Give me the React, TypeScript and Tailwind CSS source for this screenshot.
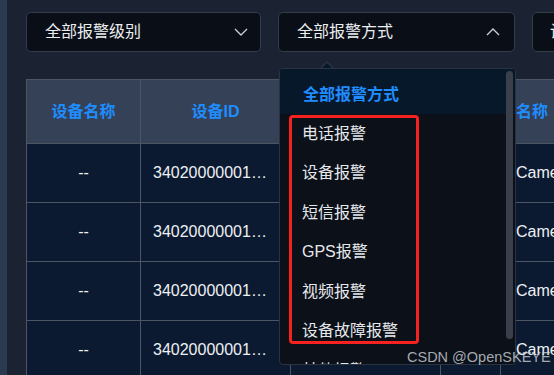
import React from 'react'

const FONT = { fontFamily: '"Liberation Sans", "Noto Sans CJK SC", sans-serif' }

const ALARM_TYPES = ['电话报警', '设备报警', '短信报警', 'GPS报警', '视频报警', '设备故障报警', '其他报警']

const ROWS = [0, 1, 2, 3]

function Chevron({ up }: { up?: boolean }) {
  return (
    <svg width="14" height="8" viewBox="0 0 14 8" className="shrink-0">
      <polyline
        points={up ? '1,7 7,1 13,7' : '1,1 7,7 13,1'}
        fill="none"
        stroke="#c9ccd2"
        strokeWidth="1.4"
      />
    </svg>
  )
}

function SelectBox({ label, up, className }: { label: string; up?: boolean; className: string }) {
  return (
    <div
      className={`h-[40px] shrink-0 rounded-[5px] border border-[#323c4b] bg-[#0a0e16] flex items-center justify-between text-[16px] text-[#eceef2] ${className}`}
    >
      <span>{label}</span>
      <Chevron up={up} />
    </div>
  )
}

export default function App() {
  return (
    <div className="relative w-[554px] h-[375px] overflow-hidden bg-[#1b2333] flex" style={FONT}>
      {/* side strip */}
      <div className="w-[7px] shrink-0 bg-[#2c3a4f]" />

      <div className="flex-1 pl-[19px] pt-[12px] min-w-0">
        {/* filter row */}
        <div className="flex gap-[17px]">
          <SelectBox label="全部报警级别" className="w-[235px] pl-[18px] pr-[12px]" />
          <SelectBox label="全部报警方式" up className="w-[237px] pl-[18px] pr-[14px]" />
          <SelectBox label="设备类型" className="w-[200px] pl-[17px] pr-[14px]" />
        </div>

        {/* table */}
        <div className="mt-[27px] w-[700px] border-l border-t border-[#4d5563]">
          <div className="grid grid-cols-[114px_150px_150px_60px_1fr] h-[64px] bg-[#344156] text-[16px] font-bold text-[#1f8dff]">
            <div className="border-r border-b border-[#4d5563] flex items-center justify-center">设备名称</div>
            <div className="border-r border-b border-[#4d5563] flex items-center justify-center">设备ID</div>
            <div className="border-r border-b border-[#4d5563] flex items-center justify-center">报警级别</div>
            <div className="border-r border-b border-[#4d5563]" />
            <div className="border-r border-b border-[#4d5563] flex items-center pl-[15px]">名称</div>
          </div>
          {ROWS.map(i => (
            <div
              key={i}
              className="grid grid-cols-[114px_150px_150px_60px_1fr] h-[59px] bg-[#0b1a30] text-[16px] text-[#eef0f3]"
            >
              <div className="border-r border-b border-[#4d5563] flex items-center justify-center">--</div>
              <div className="border-r border-b border-[#4d5563] flex items-center pl-[12px]">34020000001…</div>
              <div className="border-r border-b border-[#4d5563] flex items-center justify-center">一级警情</div>
              <div className="border-r border-b border-[#4d5563]" />
              <div className="border-r border-b border-[#4d5563] flex items-center pl-[15px]">Camera 01</div>
            </div>
          ))}
        </div>
      </div>

      {/* dropdown popper arrow */}
      <div className="absolute left-[320px] top-[61px] w-0 h-0 border-l-[7px] border-r-[7px] border-b-[7px] border-l-transparent border-r-transparent border-b-[#2b3342]" />
      <div className="absolute left-[321px] top-[62.5px] w-0 h-0 border-l-[6px] border-r-[6px] border-b-[6px] border-l-transparent border-r-transparent border-b-[#07182b]" />

      {/* dropdown */}
      <div className="absolute left-[279px] top-[68px] w-[237px] h-[297px] rounded-[4px] border border-[#2b3342] bg-[#0b1019] overflow-hidden">
        <div className="h-[45px] bg-[#07182b] flex items-center pl-[23px] pt-[6px] text-[16px] font-bold text-[#1f8dff]">
          全部报警方式
        </div>
        {ALARM_TYPES.map(t => (
          <div key={t} className="h-[39.5px] flex items-center pl-[22px] text-[16px] text-[#e6e8ec]">
            {t}
          </div>
        ))}
        {/* scrollbar */}
        <div className="absolute right-[2px] top-[2px] w-[7px] h-[268px] rounded-[4px] bg-[#3a404b]" />
      </div>

      {/* annotation box */}
      <div className="absolute left-[289px] top-[115px] w-[130px] h-[229px] rounded-[4px] border-[3px] border-[#f5221f]" />

      {/* watermark */}
      <div className="absolute left-[407px] top-[347px] text-[14.5px] text-[#cfd3d9]/80 whitespace-nowrap">
        CSDN @OpenSKEYE
      </div>
    </div>
  )
}
